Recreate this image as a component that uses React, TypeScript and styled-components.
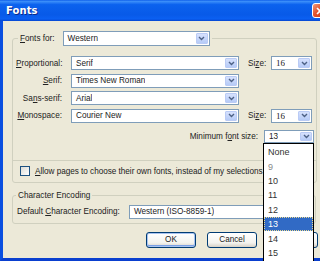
import { createGlobalStyle, styled } from "styled-components";

const GlobalStyle = createGlobalStyle`
  html, body {
    margin: 0;
    padding: 0;
    overflow: hidden;
    background: #ffffff;
  }
  body {
    width: 320px;
    height: 261px;
  }
`;

const Window = styled.div`
  position: relative;
  width: 330px;
  height: 261px;
  display: flex;
  flex-direction: column;
  font-family: "Liberation Sans", Arial, sans-serif;
  font-size: 8.2px;
  color: #222;
`;

const TitleBar = styled.div`
  height: 21px;
  flex: none;
  display: flex;
  align-items: center;
  justify-content: space-between;
  padding: 0 2px 0 6px;
  background: linear-gradient(
    #0a5ae8 0%,
    #3d90fa 6%,
    #0b62ee 22%,
    #085ae8 70%,
    #0b60f2 90%,
    #0545d0 100%
  );
`;

const Title = styled.span`
  color: #fff;
  font-family: "DejaVu Sans", sans-serif;
  font-weight: bold;
  font-size: 10px;
  letter-spacing: 0.1px;
  text-shadow: 1px 1px 0 #0a2a8a;
`;

const CloseButton = styled.div`
  width: 16px;
  height: 15px;
  box-sizing: border-box;
  border: 1px solid #fff;
  border-radius: 3px;
  background: linear-gradient(135deg, #f09a7a, #e0502c 45%, #c23a1a);
  display: flex;
  align-items: center;
  justify-content: center;
`;

const Frame = styled.div`
  flex: 1;
  display: flex;
  flex-direction: column;
  background: #ece9d8;
  border-left: 3px solid #0a4fe0;
  border-bottom: 3px solid #0a3fcf;
  padding: 10px 0 0 9px;
`;

const Group = styled.fieldset<{ $width: number }>`
  width: ${(p) => p.$width}px;
  box-sizing: border-box;
  margin: 0;
  padding: 0;
  border: 1px solid #d0d0bf;
  border-radius: 3px;
  min-inline-size: 0;
`;

const Legend = styled.legend<{ $indent?: number }>`
  margin-left: ${(p) => p.$indent ?? 5}px;
  padding: 0 2px;
  display: flex;
  align-items: center;
  gap: 8px;
  line-height: 10px;
`;

const Key = styled.span`
  text-decoration: underline;
`;

const SelectBox = styled.div<{ $width: number; $height?: number }>`
  width: ${(p) => p.$width}px;
  height: ${(p) => p.$height ?? 14}px;
  box-sizing: border-box;
  border: 1px solid #7f9db9;
  background: #fff;
  display: flex;
  align-items: center;
  justify-content: space-between;
  padding: 1px;
`;

const SelectValue = styled.span<{ $mono?: boolean }>`
  padding-left: 3px;
  white-space: nowrap;
  overflow: hidden;
  font-family: ${(p) =>
    p.$mono ? '"Liberation Serif", serif' : '"Liberation Sans", Arial, sans-serif'};
  font-size: ${(p) => (p.$mono ? "9px" : "8.2px")};
`;

const ArrowButton = styled.span`
  width: 12px;
  height: 100%;
  flex: none;
  box-sizing: border-box;
  border: 1px solid #bacbf5;
  border-radius: 1px;
  background: linear-gradient(#d6e1fd, #b6cbf7);
  display: flex;
  align-items: center;
  justify-content: center;
`;

const FontGrid = styled.div`
  display: grid;
  grid-template-columns: 46px 168px 14px 41px;
  column-gap: 9px;
  row-gap: 3.5px;
  grid-auto-rows: 14px;
  align-items: center;
  padding: 10px 0 0 3px;
`;

const RowLabel = styled.span`
  text-align: right;
  white-space: nowrap;
`;

const SizeLabel = styled.span`
  white-space: nowrap;
`;

const MinRow = styled.div`
  display: flex;
  align-items: center;
  justify-content: flex-end;
  gap: 6px;
  padding: 7px 2px 0 0;
`;

const CheckRow = styled.div`
  margin-top: 17px;
  border-top: 1px solid #d0d0bf;
  height: 21px;
  display: flex;
  align-items: center;
  gap: 5px;
  padding: 0 0 0 7px;
`;

const CheckLabel = styled.span`
  white-space: nowrap;
  letter-spacing: -0.03px;
`;

const CheckBox = styled.span`
  width: 10px;
  height: 10px;
  flex: none;
  box-sizing: border-box;
  border: 1px solid #1c5180;
  background: linear-gradient(135deg, #dcdcd5, #ffffff);
`;

const EncodingGroup = styled(Group)`
  margin-top: 8px;
`;

const EncodingRow = styled.div`
  display: flex;
  align-items: center;
  gap: 9px;
  padding: 4px 0 4px 4px;
`;

const ButtonRow = styled.div`
  display: flex;
  justify-content: flex-end;
  gap: 11px;
  padding: 8px 12px 0 0;
`;

const Button = styled.div<{ $default?: boolean }>`
  width: 50px;
  height: 16px;
  box-sizing: border-box;
  border: 1px solid #003c74;
  border-radius: 3px;
  background: linear-gradient(#ffffff, #f3f3ef 70%, #d6d0c5);
  display: flex;
  align-items: center;
  justify-content: center;
  box-shadow: ${(p) =>
    p.$default ? "inset 0 0 0 1px #a8c3f0, inset 0 -1px 0 1px #7aa0e6" : "none"};
`;

const ListPopup = styled.div`
  position: absolute;
  left: 263px;
  top: 143px;
  width: 51px;
  height: 120px;
  box-sizing: border-box;
  border: 1px solid #000;
  background: #fff;
  padding-top: 1px;
`;

const ListItem = styled.div<{ $selected?: boolean; $dim?: boolean }>`
  height: 14.4px;
  box-sizing: border-box;
  display: flex;
  align-items: center;
  padding-left: 3px;
  font-size: 9px;
  color: ${(p) => (p.$selected ? "#fff" : p.$dim ? "#8a8a8a" : "#333")};
  background: ${(p) => (p.$selected ? "#316ac5" : "transparent")};
  border: 1px dotted ${(p) => (p.$selected ? "#e8d890" : "transparent")};
`;

const Chevron = () => (
  <svg width="7" height="5" viewBox="0 0 7 5">
    <path d="M1 1 L3.5 3.5 L6 1" fill="none" stroke="#4d6185" strokeWidth="1.4" />
  </svg>
);

const Select = ({
  width,
  value,
  mono,
  height,
}: {
  width: number;
  value: string;
  mono?: boolean;
  height?: number;
}) => (
  <SelectBox $width={width} $height={height}>
    <SelectValue $mono={mono}>{value}</SelectValue>
    <ArrowButton>
      <Chevron />
    </ArrowButton>
  </SelectBox>
);

const sizes = ["None", "9", "10", "11", "12", "13", "14", "15"];

export default function App() {
  return (
    <>
      <GlobalStyle />
      <Window>
        <TitleBar>
          <Title>Fonts</Title>
          <CloseButton>
            <svg width="8" height="8" viewBox="0 0 8 8">
              <path d="M1 1 L7 7 M7 1 L1 7" stroke="#fff" strokeWidth="1.6" />
            </svg>
          </CloseButton>
        </TitleBar>
        <Frame>
          <Group $width={305}>
            <Legend>
              <span>
                <Key>F</Key>onts for:
              </span>
              <Select width={147} height={15} value="Western" />
            </Legend>
            <FontGrid>
              <RowLabel>
                <Key>P</Key>roportional:
              </RowLabel>
              <Select width={168} value="Serif" />
              <SizeLabel>
                Si<Key>z</Key>e:
              </SizeLabel>
              <Select width={41} value="16" mono />

              <RowLabel>
                <Key>S</Key>erif:
              </RowLabel>
              <Select width={168} value="Times New Roman" />
              <span />
              <span />

              <RowLabel>
                Sa<Key>n</Key>s-serif:
              </RowLabel>
              <Select width={168} value="Arial" />
              <span />
              <span />

              <RowLabel>
                <Key>M</Key>onospace:
              </RowLabel>
              <Select width={168} value="Courier New" />
              <SizeLabel>
                Si<Key>z</Key>e:
              </SizeLabel>
              <Select width={41} value="16" mono />
            </FontGrid>
            <MinRow>
              <span>
                Minimum f<Key>o</Key>nt size:
              </span>
              <Select width={50} height={13} value="13" />
            </MinRow>
            <CheckRow>
              <CheckBox />
              <CheckLabel>
                <Key>A</Key>llow pages to choose their own fonts, instead of my
                selections
              </CheckLabel>
            </CheckRow>
          </Group>
          <EncodingGroup $width={304}>
            <Legend $indent={3}>Character Encoding</Legend>
            <EncodingRow>
              <span>
                Default <Key>C</Key>haracter Encoding:
              </span>
              <Select width={185} value="Western (ISO-8859-1)" />
            </EncodingRow>
          </EncodingGroup>
          <ButtonRow>
            <Button $default>OK</Button>
            <Button>Cancel</Button>
            <Button>Help</Button>
          </ButtonRow>
        </Frame>
        <ListPopup>
          {sizes.map((s) => (
            <ListItem key={s} $selected={s === "13"} $dim={s === "9"}>
              {s}
            </ListItem>
          ))}
        </ListPopup>
      </Window>
    </>
  );
}
